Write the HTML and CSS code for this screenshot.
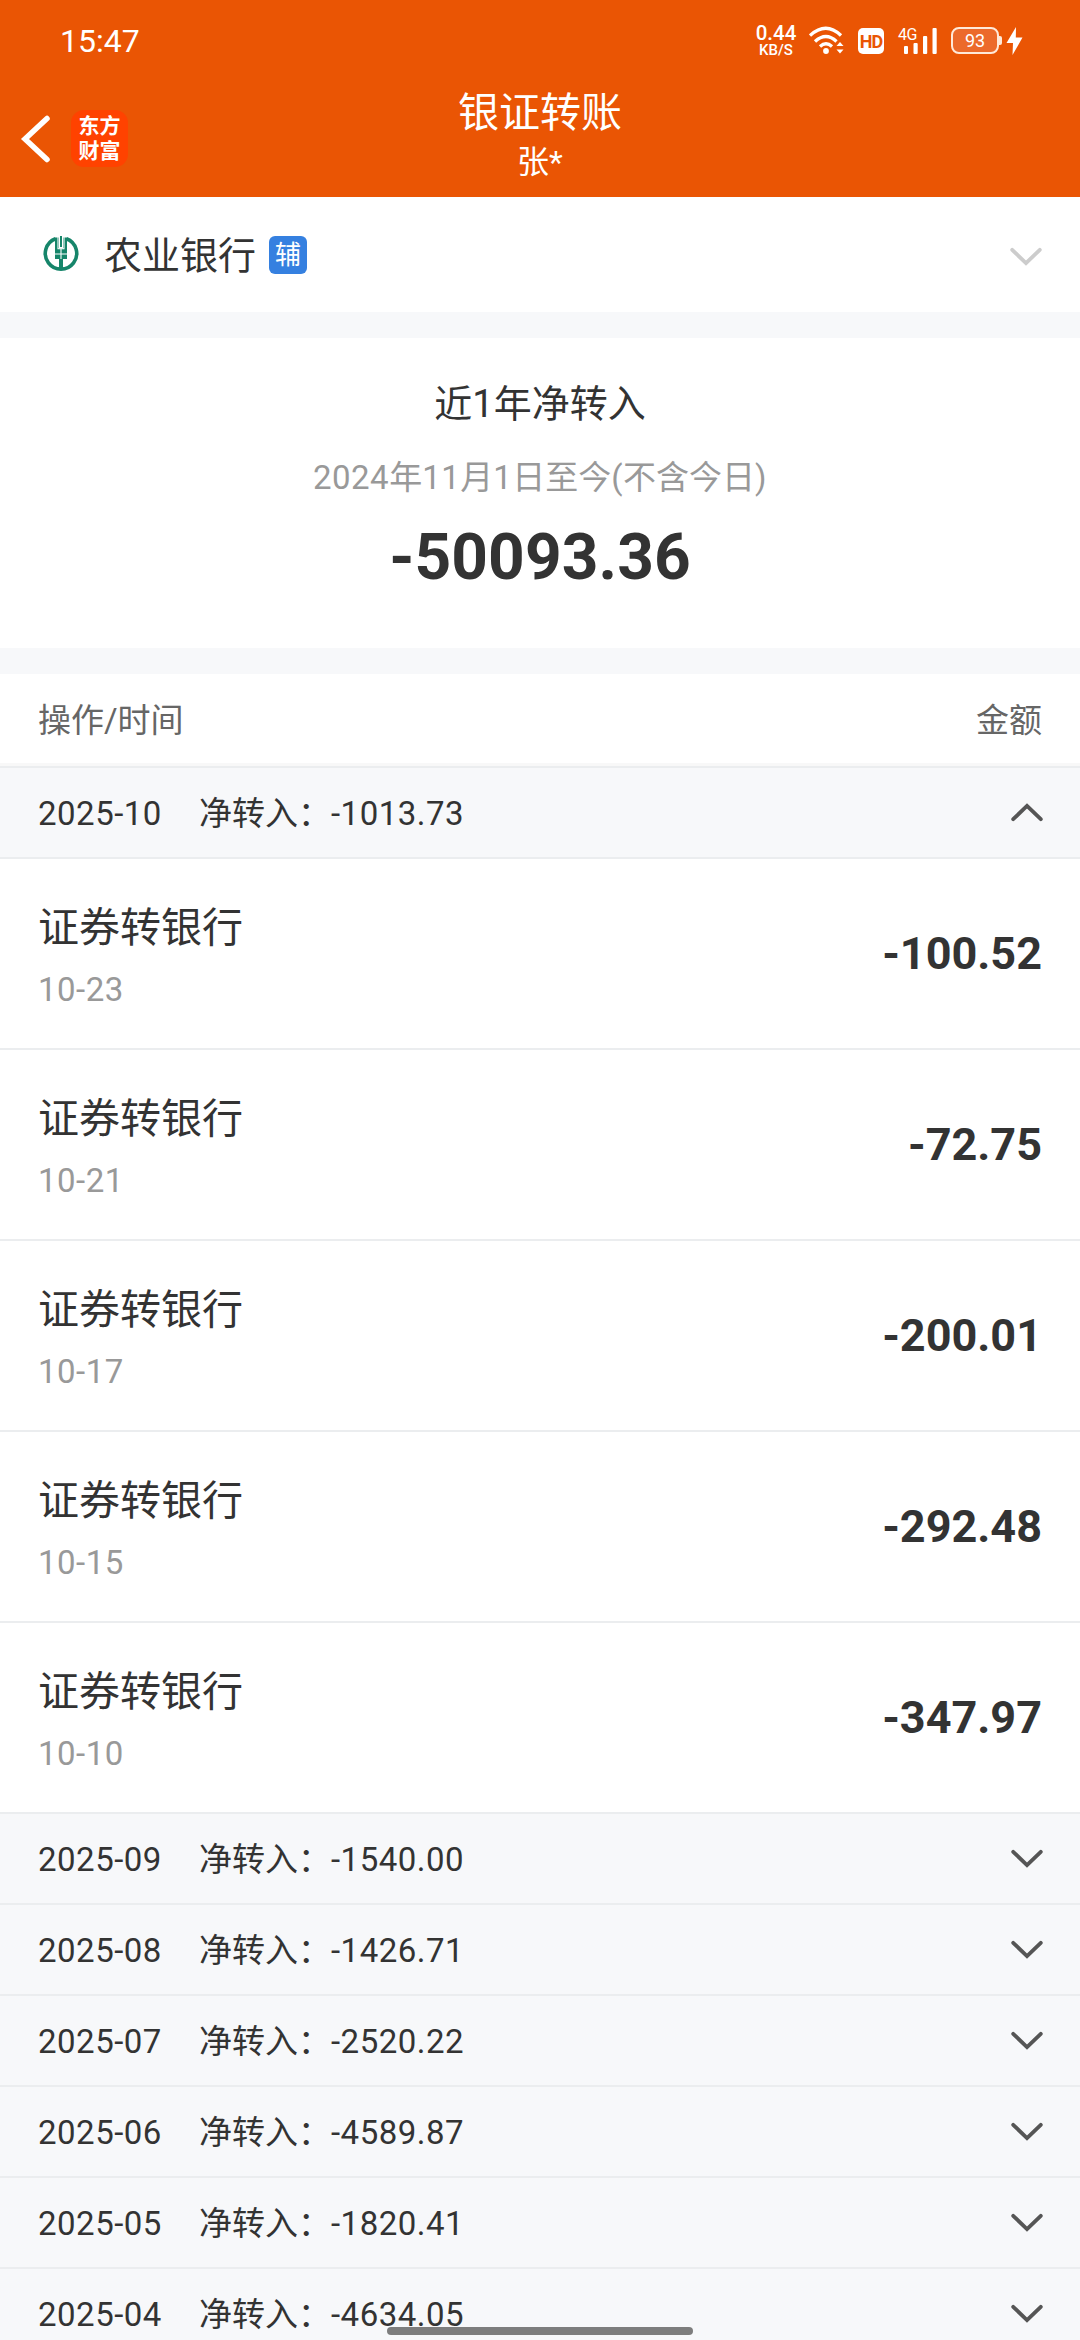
FILE: index.html
```html
<!DOCTYPE html>
<html lang="zh-CN">
<head>
<meta charset="utf-8">
<title>银证转账</title>
<link rel="stylesheet" href="styles.css">
</head>
<body>
<svg class="symbols" aria-hidden="true">
  <symbol id="chevron" viewBox="0 0 34 20"><path d="M3.2 2.8 17 16.2 30.800 2.800" fill="none" stroke="currentColor" stroke-width="3.800" stroke-linecap="round"/></symbol>
</svg>
<div class="screen">
  <header class="header">
    <div class="status">
      <span class="clock">15:47</span>
      <div class="status-icons">
        <div class="speed"><span>0.44</span><span class="unit">KB/S</span></div>
        <svg class="wifi" width="36" height="30" viewBox="0 0 36 30" fill="none" stroke="#fff" stroke-width="3.300">
          <path d="M1 9.500Q17 -5 32 9.500M6 15.500Q17 5.500 27.500 15.500M11 20.500Q17 15 23 20.500"/>
          <circle cx="17" cy="25" r="2.900" fill="#fff" stroke="none"/>
          <path d="M27.500 20 31 16 34.500 20zM27.500 23.500 31 27.500 34.500 23.500z" fill="#fff" stroke="none"/>
        </svg>
        <span class="hd">HD</span>
        <div class="signal">
          <span class="net">4G</span>
          <svg width="38" height="28" viewBox="0 0 38 28" fill="#fff"><rect x="5" y="18" width="4" height="8" rx="1"/><rect x="14.500" y="15" width="4.200" height="11" rx="1"/><rect x="24" y="8" width="4.200" height="18" rx="1"/><rect x="33.500" y="0" width="4.200" height="26" rx="1"/></svg>
        </div>
        <div class="power"><span class="battery">93</span><i class="tip"></i></div>
        <svg class="bolt" width="17" height="28" viewBox="0 0 17 28" fill="#fff"><path d="M10 0 .5 16H7L6.500 28 16.500 10.500H9.800z"/></svg>
      </div>
    </div>
    <div class="nav">
      <div class="nav-left">
        <svg width="32" height="50" viewBox="0 0 32 50"><path d="M27 4.500 5 25 27 45.500" fill="none" stroke="#fff" stroke-width="5.500" stroke-linecap="round"/></svg>
        <div class="logo"><span>东方</span><span>财富</span></div>
      </div>
      <div class="nav-title"><h1>银证转账</h1><p>张*</p></div>
    </div>
  </header>

  <section class="bank">
    <svg class="bank-logo" width="36" height="36" viewBox="0 0 36 36">
      <path d="M12.500 2.700A15.700 15.700 0 1 0 23.500 2.700" fill="none" stroke="#16856a" stroke-width="3.600"/>
      <path d="M12 1.500H16V12.500H20V1.500H24V23H20V34H16V23H12z" fill="#16856a"/>
      <path d="M17 0V11H19V0z" fill="#16856a"/>
      <path d="M15 1V12.700H21V1M12 18H24M18 13V23" fill="none" stroke="#fff" stroke-width="1.100"/>
    </svg>
    <span class="bank-name">农业银行</span>
    <span class="tag">辅</span>
    <svg class="arrow light" width="34" height="20"><use href="#chevron"/></svg>
  </section>

  <section class="summary">
    <h2>近1年净转入</h2>
    <p class="range"><span class="num">2024</span>年<span class="num">11</span>月<span class="num">1</span>日至今<span class="num">(</span>不含今日<span class="num">)</span></p>
    <strong class="total">-50093.36</strong>
  </section>

  <div class="columns"><span>操作/时间</span><span>金额</span></div>

  <div class="month first"><span class="date">2025-10</span><span class="label">净转入：</span><span class="sum">-1013.73</span><svg class="arrow up" width="34" height="20"><use href="#chevron"/></svg></div>
  <div class="entry"><div><h3>证券转银行</h3><time>10-23</time></div><b>-100.52</b></div>
  <div class="entry"><div><h3>证券转银行</h3><time>10-21</time></div><b>-72.75</b></div>
  <div class="entry"><div><h3>证券转银行</h3><time>10-17</time></div><b>-200.01</b></div>
  <div class="entry"><div><h3>证券转银行</h3><time>10-15</time></div><b>-292.48</b></div>
  <div class="entry"><div><h3>证券转银行</h3><time>10-10</time></div><b>-347.97</b></div>
  <div class="month"><span class="date">2025-09</span><span class="label">净转入：</span><span class="sum">-1540.00</span><svg class="arrow" width="34" height="20"><use href="#chevron"/></svg></div>
  <div class="month"><span class="date">2025-08</span><span class="label">净转入：</span><span class="sum">-1426.71</span><svg class="arrow" width="34" height="20"><use href="#chevron"/></svg></div>
  <div class="month"><span class="date">2025-07</span><span class="label">净转入：</span><span class="sum">-2520.22</span><svg class="arrow" width="34" height="20"><use href="#chevron"/></svg></div>
  <div class="month"><span class="date">2025-06</span><span class="label">净转入：</span><span class="sum">-4589.87</span><svg class="arrow" width="34" height="20"><use href="#chevron"/></svg></div>
  <div class="month"><span class="date">2025-05</span><span class="label">净转入：</span><span class="sum">-1820.41</span><svg class="arrow" width="34" height="20"><use href="#chevron"/></svg></div>
  <div class="month"><span class="date">2025-04</span><span class="label">净转入：</span><span class="sum">-4634.05</span><svg class="arrow" width="34" height="20"><use href="#chevron"/></svg></div>
  <div class="home-bar"></div>
</div>
</body>
</html>
```
FILE: styles.css
```css
* { box-sizing: border-box; margin: 0; padding: 0; }
body { background: #fff; color: #333; font-family: Roboto, "Noto Sans CJK SC", sans-serif; font-size: 33px; }
h1, h2, h3 { font-weight: 400; }
.symbols { position: absolute; width: 0; height: 0; }
.screen { position: relative; width: 1080px; height: 2340px; overflow: hidden; }
.num { letter-spacing: 0.5px; }

.header { height: 197px; background: #ea5504; color: #fff; display: flex; flex-direction: column; }
.status { height: 80px; padding: 1px 57px 0 60px; display: flex; justify-content: space-between; align-items: center; }
.clock { font-size: 32px; line-height: 40px; }
.status-icons { display: flex; align-items: center; height: 30px; }
.speed { width: 44px; display: flex; flex-direction: column; align-items: center; font-size: 20.5px; line-height: 17px; font-weight: 500; padding-top: 2px; }
.speed .unit { font-size: 15px; line-height: 17px; }
.wifi { margin-left: 11px; }
.hd { margin-left: 13px; width: 26px; height: 26px; border-radius: 5px; background: #fff; color: #ea5504; font-size: 18px; font-weight: 700; line-height: 27px; text-align: center; letter-spacing: -1px; }
.signal { position: relative; width: 38px; height: 26px; margin-left: 15px; }
.signal svg { display: block; }
.net { position: absolute; left: -1px; top: -1px; font-size: 16px; line-height: 16px; letter-spacing: -0.5px; }
.power { display: flex; align-items: center; margin-left: 14px; }
.battery { width: 48px; height: 27px; border: 2px solid #ffe9d8; border-radius: 8px; background: #ec6a2b; font-size: 18px; line-height: 23px; text-align: center; }
.tip { width: 3px; height: 9px; background: #ffe9d8; border-radius: 0 2px 2px 0; }
.bolt { margin-left: 4px; }

.nav { height: 117px; display: grid; grid-template-columns: 300px 480px 300px; }
.nav-left { display: flex; align-items: center; padding: 0 0 1px 20px; height: 118px; }
.logo { width: 57px; height: 57px; margin-left: 19px; border-radius: 13px; background: #ff4200; display: flex; flex-direction: column; justify-content: center; align-items: center; font-size: 21px; line-height: 25px; font-weight: 700; }
.nav-title { padding-top: 2px; text-align: center; }
.nav-title h1 { font-size: 41px; line-height: 62px; }
.nav-title p { font-size: 32px; line-height: 36px; }

.bank { height: 115px; padding: 2px 37px 0 43px; display: flex; align-items: center; }
.bank-logo { margin-bottom: 4px; }
.bank-name { margin-left: 25px; font-size: 38px; line-height: 50px; }
.tag { margin: 0 0 1px 13px; width: 38px; height: 38px; border-radius: 6px; background: #3580e0; color: #fff; font-size: 26px; line-height: 38px; text-align: center; }
.arrow { margin-left: auto; color: #555; display: block; }
.arrow.light { color: #ccc; margin-top: 2px; }
.arrow.up { transform: rotate(180deg); margin-bottom: 2px; }

.summary { height: 362px; border: solid #f7f8fa; border-width: 26px 0; padding-top: 41px; text-align: center; }
.summary h2 { font-size: 38px; line-height: 50px; }
.range { margin-top: 27px; color: #999; line-height: 44px; }
.total { display: block; font-size: 64px; line-height: 76px; margin-top: 20px; letter-spacing: 0.1px; }

.columns { height: 92px; padding: 0 38px 2px; border-bottom: 3px solid #f8f8f8; color: #666; display: flex; justify-content: space-between; align-items: center; }

.month { height: 91px; padding: 2px 36px 0 38px; background: #f7f8fa; border-bottom: 2px solid #ebedef; display: flex; align-items: center; line-height: 44px; }
.month.first { height: 93px; border-top: 2px solid #ebedef; }
.month .arrow { margin-bottom: 2px; }
.month .arrow.up { margin-bottom: 4px; }
.date { width: 161px; letter-spacing: 0.5px; }
.label { width: 132px; }
.sum { letter-spacing: 0.5px; }

.entry { height: 191px; padding: 0 38px; border-bottom: 2px solid #ebedef; display: flex; justify-content: space-between; align-items: center; }
.entry h3 { font-size: 41px; line-height: 60px; padding-top: 2px; }
.entry time { display: block; color: #999; line-height: 44px; margin-top: 10px; letter-spacing: 0.5px; }
.entry b { font-size: 45px; line-height: 54px; margin-top: 1px; }

.home-bar { position: absolute; left: 387px; bottom: 5px; width: 306px; height: 8px; border-radius: 4px; background: #7d7d7d; }
```
